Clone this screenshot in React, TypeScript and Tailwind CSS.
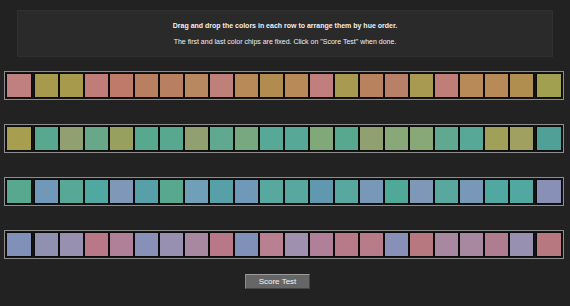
import React from "react";

const rows: string[][] = [
  [
    "#c08080", "#a89a4c", "#a89a4c", "#c07c78", "#c07a6a", "#b88060", "#b88060", "#b88860",
    "#c0807a", "#b88a58", "#b08c50", "#b88a58", "#c07e7c", "#a89a50", "#b8825e", "#b88068",
    "#a89a50", "#c07e78", "#b88a58", "#b88a58", "#b08e50", "#a0a050",
  ],
  [
    "#a89e50", "#58a890", "#90a070", "#68a888", "#98a060", "#58a890", "#58a890", "#90a070",
    "#60a890", "#78a880", "#58a898", "#58a898", "#80a878", "#58a890", "#90a070", "#88a878",
    "#88a878", "#60a890", "#58a898", "#a0a058", "#a0a060", "#50a098",
  ],
  [
    "#58a890", "#7098b8", "#58a898", "#50a8a0", "#8098b8", "#58a0a8", "#58a890", "#70a0b8",
    "#58a0a8", "#7098b8", "#58a8a0", "#58a8a0", "#6098b0", "#58a8a0", "#7898b8", "#50a898",
    "#8098b8", "#58a8a0", "#7898b8", "#50a8a0", "#50a8a0", "#8890b8",
  ],
  [
    "#8090b8", "#9090b0", "#9890b0", "#b87888", "#b08098", "#8890b8", "#9890b0", "#a888a0",
    "#b87888", "#8090b8", "#b88090", "#a090b0", "#b08098", "#b87a88", "#b87c88", "#8890b8",
    "#b87880", "#a888a0", "#a888a0", "#b07c90", "#9890b0", "#b87880",
  ],
];

function Chip({ color, fixed }: { color: string; fixed?: boolean }) {
  return (
    <div
      className={
        fixed
          ? "w-[26px] h-[25px] border border-[#0c0c0c] shrink-0"
          : "w-[25px] h-[25px] border border-[#0c0c0c] shrink-0"
      }
      style={{ backgroundColor: color }}
    />
  );
}

export default function App() {
  return (
    <div className="w-[570px] h-[306px] bg-[#222222] flex flex-col font-['Liberation_Sans',Arial,sans-serif] overflow-hidden">
      <div className="mx-[17px] mt-[10px] h-[47px] bg-[#2a2a2a] border border-[#303030] flex flex-col items-center justify-center text-[#f0f0f0]">
        <div className="text-[7px] font-bold leading-[16px]">
          Drag and drop the colors in each row to arrange them by hue order.
        </div>
        <div className="text-[7px] leading-[16px]">
          The first and last color chips are fixed. Click on "Score Test" when done.
        </div>
      </div>
      <div className="flex flex-col gap-[24px] mt-[14px]">
        {rows.map((row, ri) => (
          <div
            key={ri}
            className="ml-[4px] w-[560px] h-[29px] border border-[#8c8c8c] bg-[#141414] p-[1px] flex items-center gap-[2px]"
          >
            <Chip color={row[0]} fixed />
            <div className="flex">
              {row.slice(1, 21).map((c, i) => (
                <Chip key={i} color={c} />
              ))}
            </div>
            <Chip color={row[21]} fixed />
          </div>
        ))}
      </div>
      <div className="mt-[15px] ml-[245px]">
        <button className="w-[65px] h-[15px] bg-[#666666] border border-t-[#9a9a9a] border-l-[#8a8a8a] border-r-[#444] border-b-[#444] text-[8px] text-[#f4f4f4] leading-none flex items-center justify-center">
          Score Test
        </button>
      </div>
    </div>
  );
}
